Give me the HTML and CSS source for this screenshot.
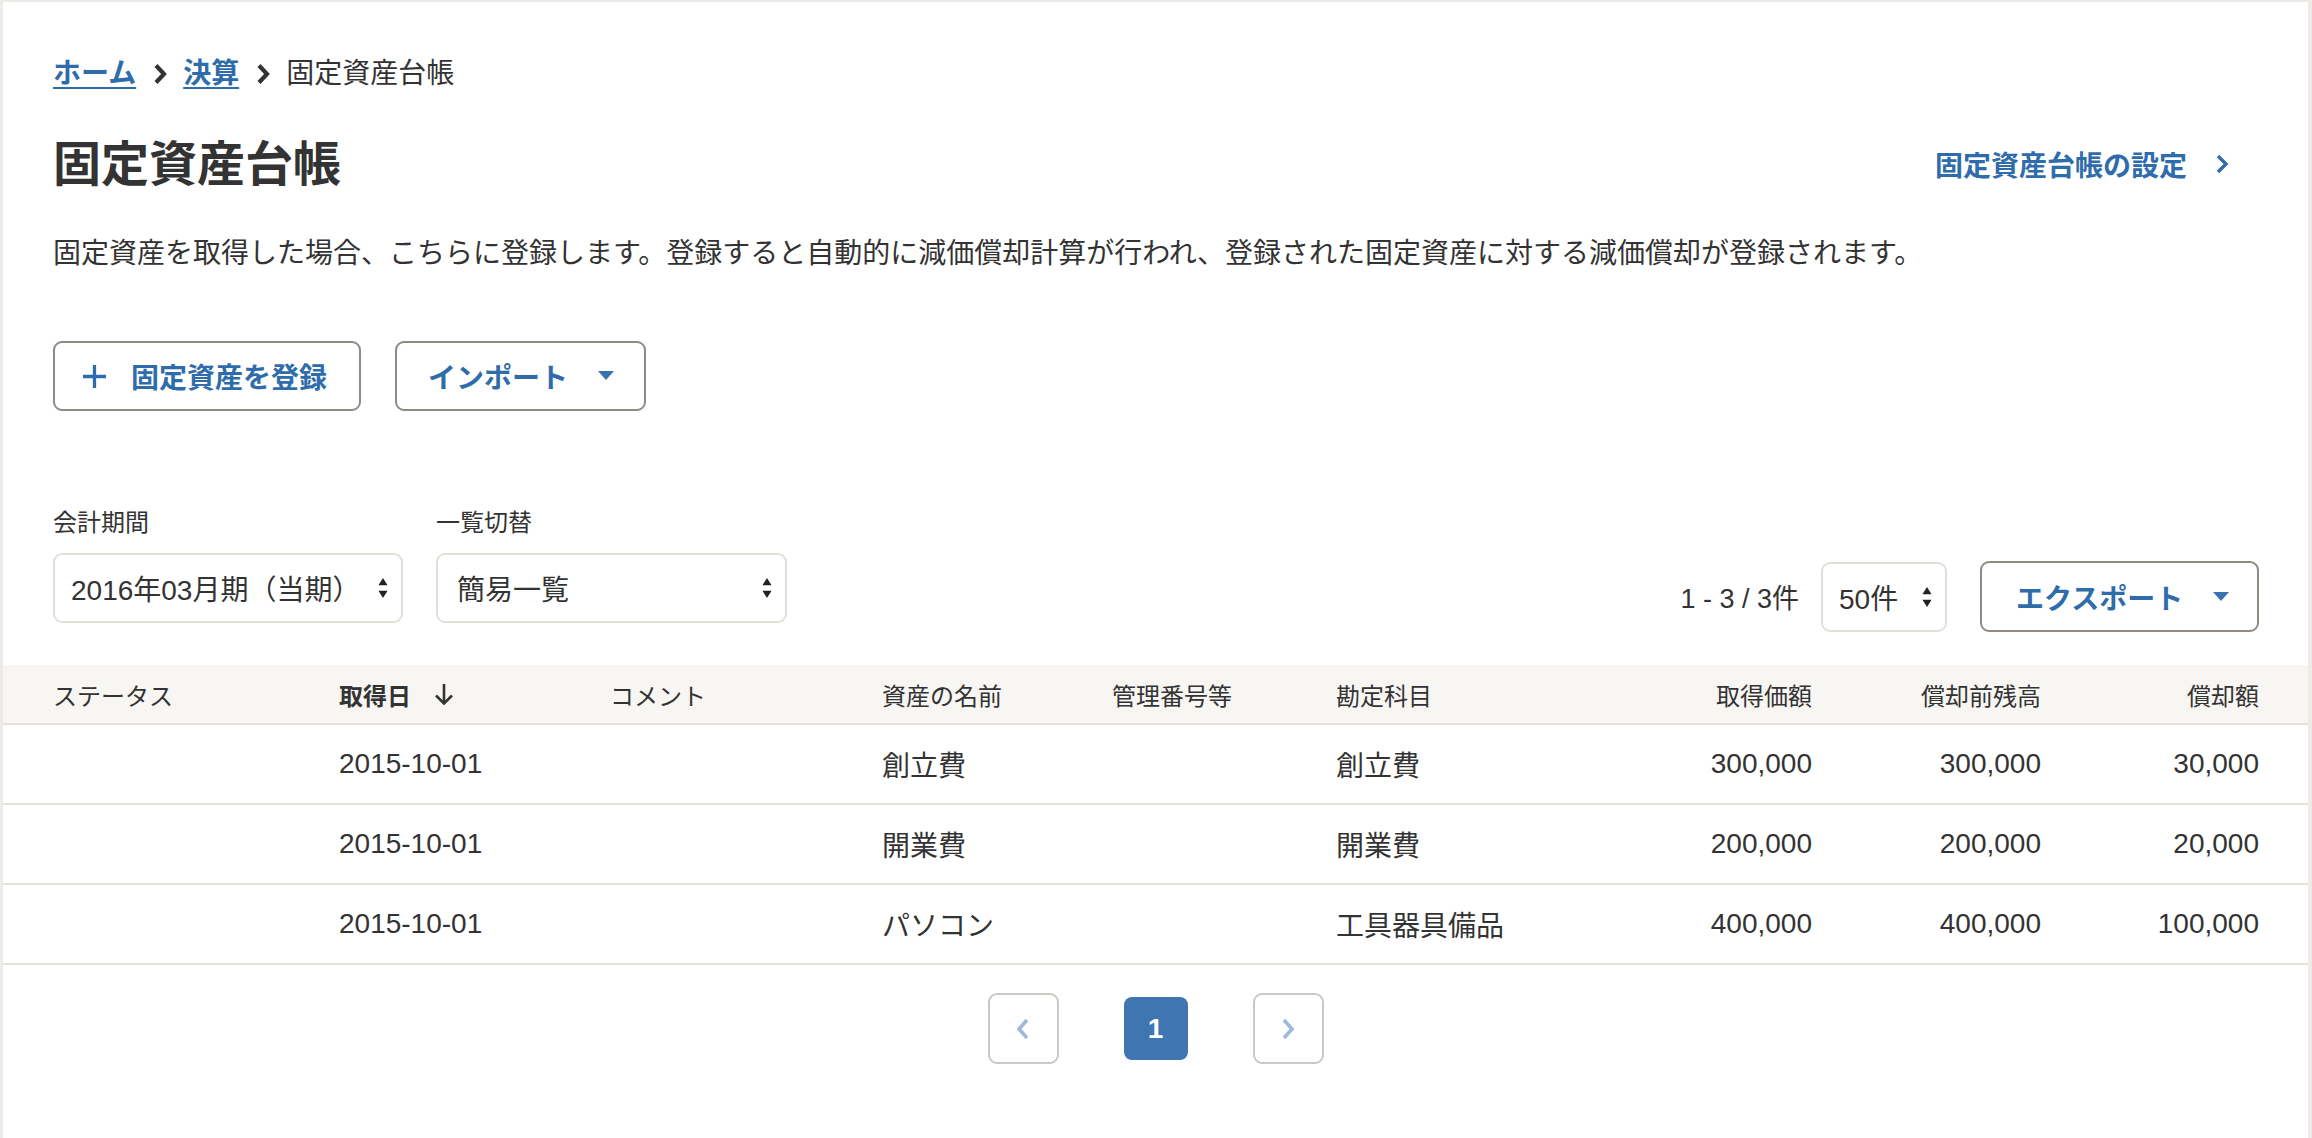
FILE: index.html
```html
<!DOCTYPE html>
<html lang="ja">
<head>
<meta charset="utf-8">
<title>固定資産台帳</title>
<link rel="stylesheet" href="styles.css">
</head>
<body>
<div class="panel">
  <nav class="crumbs">
    <a href="#" class="crumb-link">ホーム</a>
    <svg class="crumb-sep" viewBox="0 0 14 22"><path d="M3 2.5 L11 11 L3 19.5"/></svg>
    <a href="#" class="crumb-link">決算</a>
    <svg class="crumb-sep" viewBox="0 0 14 22"><path d="M3 2.5 L11 11 L3 19.5"/></svg>
    <span class="crumb-current">固定資産台帳</span>
  </nav>

  <header class="page-head">
    <h1 class="page-title">固定資産台帳</h1>
    <a href="#" class="settings-link">固定資産台帳の設定<svg class="settings-chev" viewBox="0 0 14 22"><path d="M3 3 L11 11 L3 19"/></svg></a>
  </header>

  <p class="desc">固定資産を取得した場合、こちらに登録します。登録すると自動的に減価償却計算が行われ、登録された固定資産に対する減価償却が登録されます。</p>

  <div class="actions">
    <button class="btn btn-add"><svg class="plus" viewBox="0 0 26 26"><path d="M13 1 V25 M1 13 H25"/></svg>固定資産を登録</button>
    <button class="btn btn-import">インポート<svg class="caret" viewBox="0 0 16 10"><path d="M0 0 H16 L8 9 Z"/></svg></button>
  </div>

  <div class="controls">
    <div class="filters">
      <div class="field">
        <label class="field-label">会計期間</label>
        <div class="select select-period"><span>2016年03月期（当期）</span><svg class="updown" viewBox="0 0 10 22"><path d="M5 0 L10 8 H0 Z M0 14 H10 L5 22 Z"/></svg></div>
      </div>
      <div class="field">
        <label class="field-label">一覧切替</label>
        <div class="select select-view"><span>簡易一覧</span><svg class="updown" viewBox="0 0 10 22"><path d="M5 0 L10 8 H0 Z M0 14 H10 L5 22 Z"/></svg></div>
      </div>
    </div>
    <div class="list-tools">
      <span class="count">1 - 3 / 3件</span>
      <div class="select select-per"><span>50件</span><svg class="updown" viewBox="0 0 10 22"><path d="M5 0 L10 8 H0 Z M0 14 H10 L5 22 Z"/></svg></div>
      <button class="btn btn-export">エクスポート<svg class="caret" viewBox="0 0 16 10"><path d="M0 0 H16 L8 9 Z"/></svg></button>
    </div>
  </div>

  <div class="table">
    <div class="row head">
      <div class="cell first">ステータス</div>
      <div class="cell sorted">取得日<svg class="sort" viewBox="0 0 20 22"><path d="M10 1 V20.5 M2 12.5 L10 20.5 L18 12.5"/></svg></div>
      <div class="cell">コメント</div>
      <div class="cell">資産の名前</div>
      <div class="cell">管理番号等</div>
      <div class="cell">勘定科目</div>
      <div class="cell num">取得価額</div>
      <div class="cell num">償却前残高</div>
      <div class="cell num last">償却額</div>
    </div>
    <div class="row">
      <div class="cell first"></div>
      <div class="cell">2015-10-01</div>
      <div class="cell"></div>
      <div class="cell">創立費</div>
      <div class="cell"></div>
      <div class="cell">創立費</div>
      <div class="cell num">300,000</div>
      <div class="cell num">300,000</div>
      <div class="cell num last">30,000</div>
    </div>
    <div class="row">
      <div class="cell first"></div>
      <div class="cell">2015-10-01</div>
      <div class="cell"></div>
      <div class="cell">開業費</div>
      <div class="cell"></div>
      <div class="cell">開業費</div>
      <div class="cell num">200,000</div>
      <div class="cell num">200,000</div>
      <div class="cell num last">20,000</div>
    </div>
    <div class="row">
      <div class="cell first"></div>
      <div class="cell">2015-10-01</div>
      <div class="cell"></div>
      <div class="cell">パソコン</div>
      <div class="cell"></div>
      <div class="cell">工具器具備品</div>
      <div class="cell num">400,000</div>
      <div class="cell num">400,000</div>
      <div class="cell num last">100,000</div>
    </div>
  </div>

  <nav class="pager">
    <a href="#" class="pg pg-arrow"><svg viewBox="0 0 14 24"><path d="M11 3 L3 12 L11 21"/></svg></a>
    <a href="#" class="pg pg-current">1</a>
    <a href="#" class="pg pg-arrow"><svg viewBox="0 0 14 24"><path d="M3 3 L11 12 L3 21"/></svg></a>
  </nav>
</div>
</body>
</html>
```

FILE: styles.css
```css
* { box-sizing: border-box; }

html, body { height: 100%; }

body {
  margin: 0;
  background: #eeebe6;
  font-family: "Liberation Sans", "Noto Sans CJK JP", sans-serif;
  color: #333;
  font-size: 28px;
  overflow: hidden;
}

.panel {
  background: #fff;
  margin: 2px 4px 0 3px;
  min-height: calc(100% - 2px);
  padding-top: 52px;
}

/* breadcrumb */
.crumbs {
  display: flex;
  align-items: center;
  height: 40px;
  padding-left: 50px;
  line-height: 40px;
}
.crumb-link {
  color: #2f6cab;
  font-weight: bold;
  text-decoration: underline;
  text-decoration-thickness: 2px;
  text-underline-offset: 4px;
}
.crumb-sep {
  width: 14px;
  height: 22px;
  margin: 0 16px 0 17px;
  fill: none;
  stroke: #333;
  stroke-width: 4.2;
}
.crumb-current { color: #333; }

/* page head */
.page-head {
  display: flex;
  align-items: center;
  justify-content: space-between;
  margin-top: 39px;
  padding: 0 49px 0 50px;
}
.page-title {
  margin: 0;
  font-size: 48px;
  line-height: 64px;
  font-weight: bold;
  color: #333;
}
.settings-link {
  display: flex;
  align-items: center;
  color: #2f6cab;
  font-weight: bold;
  text-decoration: none;
  padding-right: 30px;
  margin-top: -2px;
}
.settings-chev {
  width: 14px;
  height: 22px;
  margin-left: 28px;
  fill: none;
  stroke: #2f6cab;
  stroke-width: 3.4;
}

.desc {
  margin: 37px 0 0;
  padding-left: 50px;
  line-height: 40px;
}

/* action buttons */
.actions {
  display: flex;
  gap: 34px;
  margin-top: 67px;
  padding-left: 50px;
}
.btn {
  display: inline-flex;
  align-items: center;
  height: 70px;
  background: #fff;
  border: 2px solid #8f8b83;
  border-radius: 9px;
  color: #2f6cab;
  font-family: inherit;
  font-size: 28px;
  font-weight: bold;
  cursor: pointer;
}
.btn-add {
  width: 308px;
  padding: 0 0 0 27px;
}
.plus {
  width: 25px;
  height: 25px;
  margin-right: 24px;
  fill: none;
  stroke: #2f6cab;
  stroke-width: 3.4;
}
.btn-import {
  width: 251px;
  padding: 0 0 0 31px;
}
.caret {
  width: 16px;
  height: 10px;
  margin-left: 30px;
  fill: #3a72b0;
}

/* filters and list tools */
.controls {
  display: flex;
  justify-content: space-between;
  align-items: flex-end;
  margin-top: 96px;
  padding: 0 49px 0 50px;
}
.filters {
  display: flex;
  gap: 33px;
}
.field {
  display: flex;
  flex-direction: column;
}
.field-label {
  font-size: 24px;
  line-height: 32px;
  margin-bottom: 14px;
}
.select {
  display: flex;
  align-items: center;
  justify-content: space-between;
  height: 70px;
  border: 2px solid #e3e0d9;
  border-radius: 9px;
  background: #fff;
  padding: 0 13px 0 16px;
  font-size: 28px;
}
.select-period { width: 350px; }
.select-view { width: 351px; padding-left: 19px; }
.updown {
  width: 10px;
  height: 20px;
  fill: #222;
}
.list-tools {
  display: flex;
  align-items: center;
  margin-bottom: -9px;
}
.count {
  font-size: 27px;
  margin-right: 22px;
}
.select-per {
  width: 126px;
  padding-left: 16px;
}
.btn-export {
  width: 279px;
  height: 71px;
  margin-left: 33px;
  padding: 0 0 0 34px;
}

/* table */
.table { margin-top: 42px; }
.row {
  display: grid;
  grid-template-columns: 336px 271px 272px 230px 224px 264px 212px 229px 267px;
  align-items: center;
  height: 80px;
  border-bottom: 2px solid #e5e2da;
}
.row.head {
  height: 60px;
  background: #f8f6f3;
  font-size: 24px;
}
.cell {
  white-space: nowrap;
}
.cell.first { padding-left: 50px; }
.cell.last { padding-right: 49px; }
.cell.num { text-align: right; }
.cell.sorted {
  display: flex;
  align-items: center;
  font-weight: bold;
}
.sort {
  width: 20px;
  height: 22px;
  margin-left: 23px;
  fill: none;
  stroke: #333;
  stroke-width: 2.6;
}

/* pagination */
.pager {
  display: flex;
  justify-content: center;
  align-items: center;
  gap: 65px;
  margin-top: 28px;
}
.pg {
  display: flex;
  align-items: center;
  justify-content: center;
  text-decoration: none;
}
.pg-arrow {
  width: 71px;
  height: 71px;
  border: 2px solid #cbc9c3;
  border-radius: 9px;
}
.pg-arrow svg {
  width: 14px;
  height: 24px;
  fill: none;
  stroke: #9dbadb;
  stroke-width: 3.6;
}
.pg-current {
  width: 64px;
  height: 63px;
  border-radius: 8px;
  background: #3f76b1;
  color: #fff;
  font-weight: bold;
  font-size: 28px;
}
```
